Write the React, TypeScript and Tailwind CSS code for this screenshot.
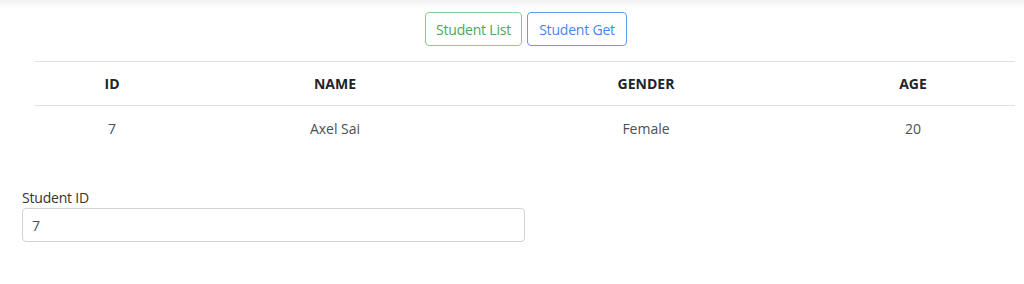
export default function App() {
  const font = { fontFamily: '"Open Sans", "Noto Sans", sans-serif' };
  return (
    <div className="w-[1024px] h-[284px] bg-white relative overflow-hidden" style={font}>
      <div className="h-[8px] bg-gradient-to-b from-[#f2f2f2] to-white" />
      <div className="flex justify-center gap-[5px] pt-[4px] pl-[28px]">
        <button className="h-[34px] w-[97px] border border-[#86cf93] rounded-[4px] text-[#46a85a] text-[14px] tracking-[-0.2px]">
          Student List
        </button>
        <button className="h-[34px] w-[100px] border border-[#5c9dfa] rounded-[4px] text-[#3f87f5] text-[14px] tracking-[-0.2px]">
          Student Get
        </button>
      </div>
      <div className="ml-[35px] w-[980px] mt-[15px]">
        <div className="grid grid-cols-[154px_292px_330px_204px] border-t border-b border-[#dee2e6] h-[45px] items-center text-[14px] font-bold text-[#212529] text-center">
          <div>ID</div>
          <div>NAME</div>
          <div>GENDER</div>
          <div>AGE</div>
        </div>
        <div className="grid grid-cols-[154px_292px_330px_204px] h-[45px] items-center text-[14px] text-[#495057] text-center">
          <div>7</div>
          <div>Axel Sai</div>
          <div>Female</div>
          <div>20</div>
        </div>
      </div>
      <div className="ml-[22px] mt-[38px]">
        <div className="text-[14px] text-[#333] leading-[18px] tracking-[-0.2px]">Student ID</div>
        <div className="mt-[1px] w-[503px] h-[34px] border border-[#ced4da] rounded-[4px] flex items-center pl-[9px] text-[14px] text-[#495057]">
          7
        </div>
      </div>
    </div>
  );
}
